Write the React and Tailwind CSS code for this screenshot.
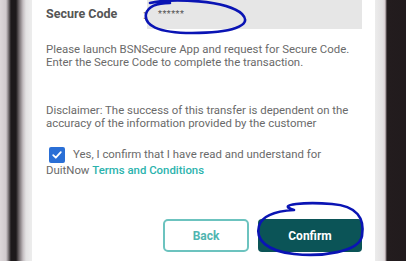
import React from 'react';

function Check() {
  return (
    <span className="inline-flex items-center justify-center w-4 h-4 rounded-[2px] bg-[#2a6fd6] align-[-3px] ml-[3px] mr-2">
      <svg width="12" height="12" viewBox="0 0 12 12">
        <path d="M2.2 6.2 L4.8 8.7 L9.8 3.2" fill="none" stroke="#fff" strokeWidth="1.8" strokeLinecap="round" strokeLinejoin="round" />
      </svg>
    </span>
  );
}

export default function App() {
  return (
    <div className="flex w-[406px] h-[261px] overflow-hidden bg-white font-['Roboto',sans-serif]">
      {/* left bezel */}
      <div className="w-8 shrink-0 bg-[linear-gradient(90deg,#dcd7d9_0px,#d0cacd_6px,#8e888b_8px,#1d191b_11px,#1d191b_16px,#6e676a_19px,#c4bec1_23px,#e3e2e3_26px,#ececec_31px)]" />

      {/* screen content */}
      <div className="relative w-[343px] shrink-0 bg-white pl-[14px] pr-[13px] whitespace-nowrap">
        <div className="flex items-center h-[29px]">
          <div className="w-[97px] text-[12.5px] font-bold text-[#555]">Secure Code</div>
          <div className="w-[4px] text-[12px] text-[#666]">:</div>
          <div className="flex-1 h-full bg-[#e6e6e6] flex items-center pl-[11px] text-[9px] text-[#555] tracking-[0.5px]">******</div>
        </div>

        <p className="mt-[14px] text-[11.4px] leading-[13px] text-[#6a6a6a]">
          Please launch BSNSecure App and request for Secure Code.
          <br />
          Enter the Secure Code to complete the transaction.
        </p>

        <p className="mt-[35px] text-[11.4px] leading-[13px] text-[#6a6a6a]">
          Disclaimer: The success of this transfer is dependent on the
          <br />
          accuracy of the information provided by the customer
        </p>

        <p className="mt-[17px] text-[11.4px] leading-[15px] text-[#6a6a6a]">
          <Check />
          Yes, I confirm that I have read and understand for
          <br />
          DuitNow <span className="font-medium text-[#2bb3ad]">Terms and Conditions</span>
        </p>

        <div className="flex justify-end gap-[9px] mt-[41px]">
          <button className="w-[86px] h-[33px] rounded-[5px] border-2 border-[#6cc3bf] bg-white text-[12px] font-bold text-[#4fb5b0]">
            Back
          </button>
          <button className="w-[104px] h-[33px] rounded-[4px] bg-[#0b5457] text-[12px] font-bold text-white">
            Confirm
          </button>
        </div>

        {/* hand-drawn annotations */}
        <svg className="absolute left-0 top-0 pointer-events-none" width="343" height="261" viewBox="0 0 343 261">
          <path d="M 118 3 C 140 -2, 195 0, 210 14 C 222 26, 198 33, 160 33 C 125 33, 112 25, 114 14 C 116 6, 124 3, 138 3" fill="none" stroke="#0a14b4" strokeWidth="2.6" strokeLinecap="round" />
          <path d="M 262 210 C 242 204, 275 202, 300 204 C 325 206, 333 218, 330 236 C 327 252, 290 257, 262 254 C 235 251, 223 240, 227 226 C 230 215, 245 211, 262 210" fill="none" stroke="#0a14b4" strokeWidth="2.6" strokeLinecap="round" />
        </svg>
      </div>

      {/* right bezel */}
      <div className="flex-1 bg-[linear-gradient(90deg,#ececec_0px,#e2e0e1_8px,#d9cfd2_10px,#231c1e_12px,#211b1d_31px)]" />
    </div>
  );
}
